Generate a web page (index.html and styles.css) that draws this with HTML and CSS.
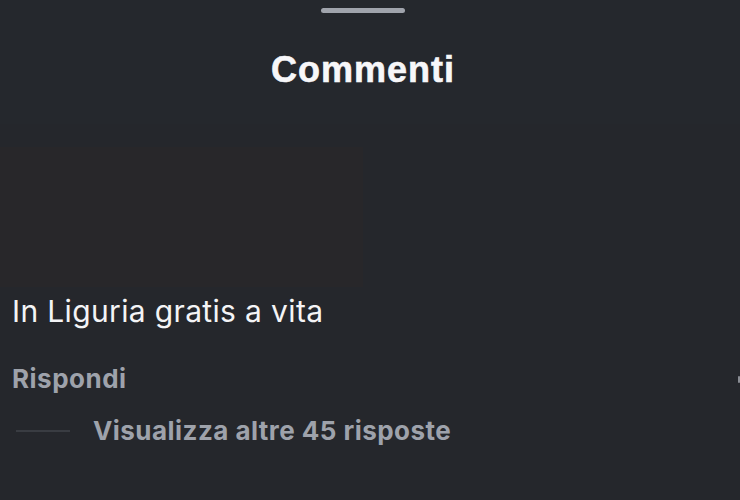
FILE: index.html
```html
<!DOCTYPE html>
<html lang="it">
<head>
<meta charset="utf-8">
<title>Commenti</title>
<link rel="stylesheet" href="styles.css">
</head>
<body>
<div class="sheet">
  <header class="sheet-header">
    <div class="handle"></div>
    <h1 class="title">Commenti</h1>
  </header>
  <section class="comment">
    <div class="media"></div>
    <p class="comment-text">In Liguria gratis a vita</p>
    <div class="actions">
      <span class="reply">Rispondi</span>
      <span class="edge-mark"></span>
    </div>
    <div class="more-replies">
      <span class="more-line"></span>
      <span class="more-label">Visualizza altre 45 risposte</span>
    </div>
  </section>
</div>
</body>
</html>
```

FILE: styles.css
```css
html, body {
  margin: 0;
  padding: 0;
  background: #25272c;
}
body {
  width: 740px;
  height: 500px;
  overflow: hidden;
  font-family: Inter, "Liberation Sans", sans-serif;
  -webkit-font-smoothing: antialiased;
}
.sheet {
  display: flex;
  flex-direction: column;
}
.sheet-header {
  display: flex;
  flex-direction: column;
  align-items: center;
  height: 124px;
  padding-right: 14px;
  background: #25282d;
}
.handle {
  margin-top: 8px;
  width: 84px;
  height: 5px;
  border-radius: 3px;
  background: #a0a4ac;
}
.title {
  margin: 37px 0 0;
  font-family: "Liberation Sans", Arial, sans-serif;
  font-weight: 700;
  font-size: 36px;
  line-height: 40px;
  letter-spacing: 1px;
  color: #f7f7f9;
  -webkit-text-stroke: 0.6px #f7f7f9;
}
.comment {
  display: flex;
  flex-direction: column;
}
.media {
  margin-top: 23px;
  width: 363px;
  height: 140px;
  background: #28272a;
}
.comment-text {
  margin: 6px 0 0 12px;
  font-size: 30px;
  line-height: 36px;
  font-weight: 400;
  color: #f4f4f6;
  letter-spacing: 0.35px;
}
.actions {
  display: flex;
  justify-content: space-between;
  align-items: center;
  margin-top: 34px;
  padding-left: 12px;
}
.reply {
  font-size: 26px;
  line-height: 32px;
  font-weight: 700;
  color: #9ea2ab;
  letter-spacing: 0.5px;
}
.edge-mark {
  width: 2px;
  height: 7px;
  border-radius: 1px;
  background: #8a8d94;
}
.more-replies {
  display: flex;
  align-items: center;
  margin-top: 20px;
  padding-left: 16px;
}
.more-line {
  width: 54px;
  height: 2px;
  background: #393c42;
}
.more-label {
  margin-left: 23px;
  font-size: 26px;
  line-height: 32px;
  font-weight: 700;
  color: #9ea2ab;
  letter-spacing: 0.45px;
}
```
